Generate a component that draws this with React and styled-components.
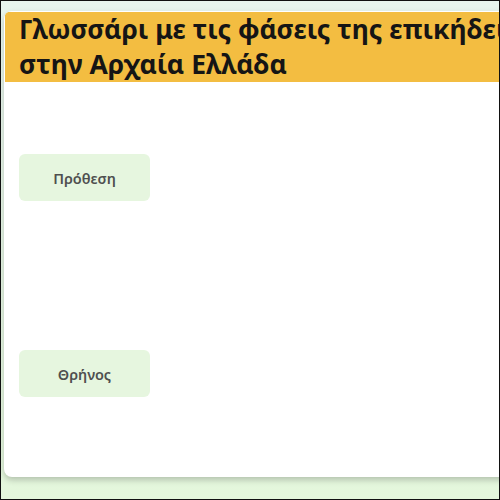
import React from "react";
import styled, { createGlobalStyle } from "styled-components";

const GlobalStyle = createGlobalStyle`
  html, body {
    margin: 0;
    padding: 0;
    overflow: hidden;
    background: #e4f6dc;
    font-family: "Noto Sans", "Open Sans", sans-serif;
  }
`;

const Frame = styled.div`
  width: 500px;
  height: 500px;
  box-sizing: border-box;
  border: 1px solid #111;
  overflow: hidden;
  padding: 10px 0 0 3px;
  background: linear-gradient(#e8f5ee, #e4f7dc);
`;

const Card = styled.div`
  width: 680px;
  height: 466px;
  background: #fff;
  border-radius: 8px;
  box-shadow: 0 3px 6px rgba(0, 0, 0, 0.22);
  overflow: hidden;
  display: flex;
  flex-direction: column;
`;

const Header = styled.h1`
  margin: 1px 0 0 1px;
  padding: 0 14px;
  background: #f3bd41;
  color: #151515;
  font-family: "Noto Sans", sans-serif;
  font-size: 26.5px;
  font-weight: 700;
  line-height: 35px;
  height: 70px;
  box-sizing: border-box;
`;

const List = styled.div`
  display: flex;
  flex-direction: column;
  gap: 149px;
  padding: 72px 0 0 15px;
`;

const Term = styled.button`
  width: 131px;
  height: 47px;
  border: none;
  border-radius: 6px;
  background: #e6f6df;
  color: #4f4f4f;
  font-family: "Noto Sans", sans-serif;
  font-size: 14.5px;
  font-weight: 600;
  cursor: pointer;
`;

const terms = ["Πρόθεση", "Θρήνος"];

export default function App() {
  return (
    <>
      <GlobalStyle />
      <Frame>
        <Card>
          <Header>
            Γλωσσάρι με τις φάσεις της επικήδειας τελετής στην Αρχαία Ελλάδα
          </Header>
          <List>
            {terms.map((t) => (
              <Term key={t}>{t}</Term>
            ))}
          </List>
        </Card>
      </Frame>
    </>
  );
}
